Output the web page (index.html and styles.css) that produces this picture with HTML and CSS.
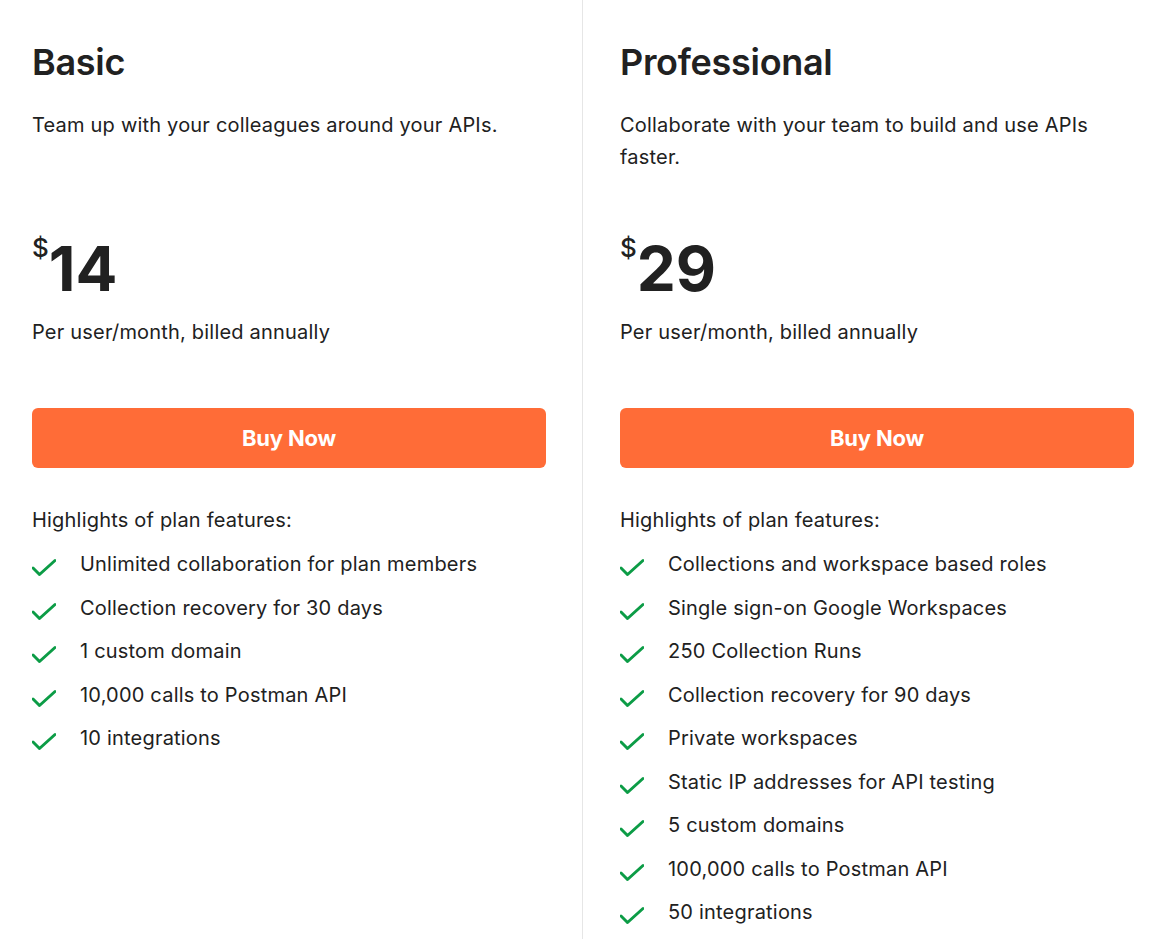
FILE: index.html
```html
<!DOCTYPE html>
<html lang="en">
<head>
<meta charset="utf-8">
<title>Plans</title>
<link rel="stylesheet" href="styles.css">
</head>
<body>
<div class="plans">
  <section class="plan plan-left">
    <h2 class="plan-title">Basic</h2>
    <p class="plan-desc">Team up with your colleagues around your APIs.</p>
    <div class="price"><span class="currency">$</span><span class="amount">14</span></div>
    <p class="billing">Per user/month, billed annually</p>
    <a class="buy" href="#">Buy Now</a>
    <p class="highlights">Highlights of plan features:</p>
    <ul class="features">
      <li><svg class="check" viewBox="0 0 24 32" width="24" height="32"><polyline points="1,20 7.5,26.5 23,12.5"/></svg><span>Unlimited collaboration for plan members</span></li>
      <li><svg class="check" viewBox="0 0 24 32" width="24" height="32"><polyline points="1,20 7.5,26.5 23,12.5"/></svg><span>Collection recovery for 30 days</span></li>
      <li><svg class="check" viewBox="0 0 24 32" width="24" height="32"><polyline points="1,20 7.5,26.5 23,12.5"/></svg><span>1 custom domain</span></li>
      <li><svg class="check" viewBox="0 0 24 32" width="24" height="32"><polyline points="1,20 7.5,26.5 23,12.5"/></svg><span>10,000 calls to Postman API</span></li>
      <li><svg class="check" viewBox="0 0 24 32" width="24" height="32"><polyline points="1,20 7.5,26.5 23,12.5"/></svg><span>10 integrations</span></li>
    </ul>
  </section>
  <section class="plan plan-right">
    <h2 class="plan-title">Professional</h2>
    <p class="plan-desc">Collaborate with your team to build and use APIs faster.</p>
    <div class="price"><span class="currency">$</span><span class="amount">29</span></div>
    <p class="billing">Per user/month, billed annually</p>
    <a class="buy" href="#">Buy Now</a>
    <p class="highlights">Highlights of plan features:</p>
    <ul class="features">
      <li><svg class="check" viewBox="0 0 24 32" width="24" height="32"><polyline points="1,20 7.5,26.5 23,12.5"/></svg><span>Collections and workspace based roles</span></li>
      <li><svg class="check" viewBox="0 0 24 32" width="24" height="32"><polyline points="1,20 7.5,26.5 23,12.5"/></svg><span>Single sign-on Google Workspaces</span></li>
      <li><svg class="check" viewBox="0 0 24 32" width="24" height="32"><polyline points="1,20 7.5,26.5 23,12.5"/></svg><span>250 Collection Runs</span></li>
      <li><svg class="check" viewBox="0 0 24 32" width="24" height="32"><polyline points="1,20 7.5,26.5 23,12.5"/></svg><span>Collection recovery for 90 days</span></li>
      <li><svg class="check" viewBox="0 0 24 32" width="24" height="32"><polyline points="1,20 7.5,26.5 23,12.5"/></svg><span>Private workspaces</span></li>
      <li><svg class="check" viewBox="0 0 24 32" width="24" height="32"><polyline points="1,20 7.5,26.5 23,12.5"/></svg><span>Static IP addresses for API testing</span></li>
      <li><svg class="check" viewBox="0 0 24 32" width="24" height="32"><polyline points="1,20 7.5,26.5 23,12.5"/></svg><span>5 custom domains</span></li>
      <li><svg class="check" viewBox="0 0 24 32" width="24" height="32"><polyline points="1,20 7.5,26.5 23,12.5"/></svg><span>100,000 calls to Postman API</span></li>
      <li><svg class="check" viewBox="0 0 24 32" width="24" height="32"><polyline points="1,20 7.5,26.5 23,12.5"/></svg><span>50 integrations</span></li>
    </ul>
  </section>
</div>
</body>
</html>
```

FILE: styles.css
```css
html, body {
  margin: 0;
  padding: 0;
  background: #ffffff;
}
body {
  font-family: Inter, "Noto Sans", "Liberation Sans", sans-serif;
  color: #212121;
  height: 939px;
  overflow: hidden;
}
.plans {
  display: grid;
  grid-template-columns: 582px 1fr;
  min-height: 939px;
}
.plan {
  padding-top: 41px;
}
.plan-left {
  padding-left: 32px;
  padding-right: 36px;
}
.plan-right {
  border-left: 1px solid #e6e6e6;
  padding-left: 37px;
  padding-right: 30px;
}
.plan-title {
  margin: 0;
  font-size: 36px;
  line-height: 43px;
  font-weight: 600;
  letter-spacing: -0.3px;
  color: #212121;
}
.plan-desc,
.billing,
.highlights,
.features li {
  font-size: 20px;
  line-height: 32px;
  letter-spacing: 0.2px;
}
.plan-desc {
  margin: 25px 0 0;
  min-height: 64px;
}
.price {
  display: flex;
  align-items: flex-start;
  margin-top: 65px;
  height: 64px;
}
.currency {
  font-size: 26px;
  line-height: 26px;
  font-weight: 500;
  margin-top: -3px;
}
.amount {
  font-size: 62px;
  line-height: 62px;
  font-weight: 700;
  letter-spacing: 0;
}
.billing {
  margin: 14px 0 0;
}
.buy {
  display: flex;
  align-items: center;
  justify-content: center;
  margin-top: 60px;
  height: 60px;
  border-radius: 6px;
  background: #ff6c37;
  color: #ffffff;
  font-size: 22px;
  font-weight: 700;
  text-decoration: none;
  letter-spacing: -0.2px;
}
.highlights {
  margin: 36px 0 0;
}
.features {
  list-style: none;
  margin: 12px 0 0;
  padding: 0;
  display: flex;
  flex-direction: column;
  gap: 11.5px;
}
.features li {
  display: flex;
  align-items: flex-start;
}
.check {
  flex: none;
  margin-right: 24px;
}
.check polyline {
  fill: none;
  stroke: #0c9c46;
  stroke-width: 3;
  stroke-linecap: round;
  stroke-linejoin: round;
}
```
